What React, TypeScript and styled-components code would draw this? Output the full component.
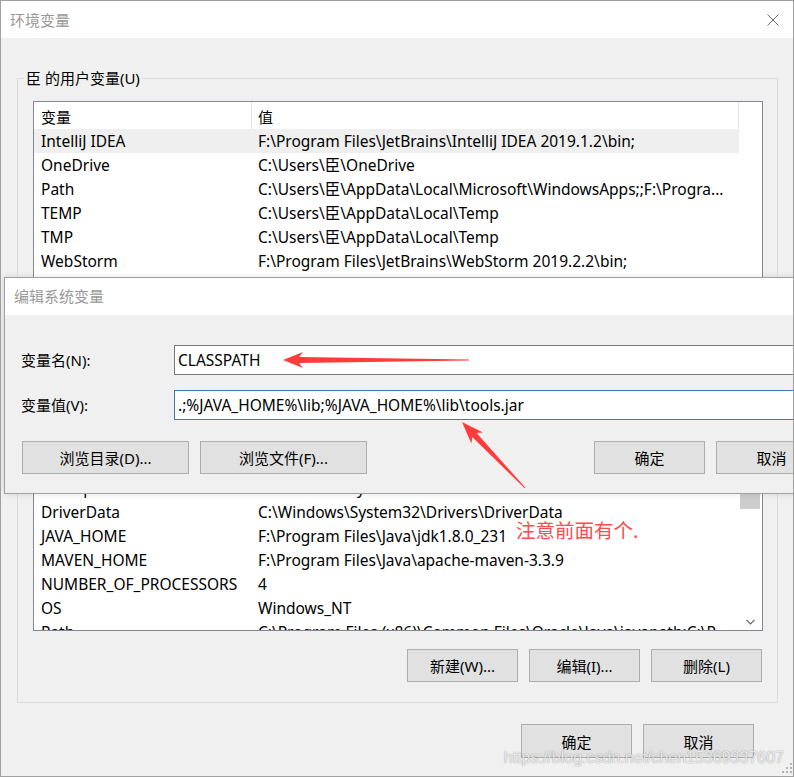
import React from "react";
import styled, { createGlobalStyle } from "styled-components";

const GlobalStyle = createGlobalStyle`
  html, body { margin: 0; padding: 0; background: #f0f0f0; }
  body { font-family: "Noto Sans", "Noto Sans CJK SC", sans-serif; }
  #root { width: 794px; height: 777px; overflow: hidden; }
`;

const Window = styled.div`
  position: relative;
  width: 794px;
  height: 777px;
  box-sizing: border-box;
  border: 1px solid #a0a0a0;
  background: #f0f0f0;
  display: flex;
  flex-direction: column;
  overflow: hidden;
  font-family: "Noto Sans", "Noto Sans CJK SC", sans-serif;
  font-size: 15px;
  color: #000;
`;

const TitleBar = styled.div`
  height: 37px;
  flex: none;
  background: #fff;
  display: flex;
  align-items: center;
  justify-content: space-between;
  padding: 0 14px 0 9px;
`;

const TitleText = styled.span`
  color: #999;
  font-size: 15px;
  line-height: 20px;
`;

const Body = styled.div`
  display: flex;
  flex-direction: column;
  padding: 40px 15px 0 16px;
`;

const GroupBox = styled.div`
  border: 1px solid #dcdcdc;
  padding: 0 14px 20px 15px;
  display: flex;
  flex-direction: column;
`;

const Legend = styled.span`
  align-self: flex-start;
  margin: -11px 0 0 -9px;
  padding: 0 2px;
  line-height: 20px;
  height: 20px;
  background: #f0f0f0;
`;

const List = styled.div`
  margin-top: 13px;
  height: 530px;
  box-sizing: border-box;
  border: 1px solid #828790;
  background: #fff;
  display: flex;
  overflow: hidden;
`;

const ListContent = styled.div`
  flex: 1;
  min-width: 0;
  display: flex;
  flex-direction: column;
  overflow: hidden;
`;

const Header = styled.div`
  display: flex;
  height: 27px;
  flex: none;
  border-right: 1px solid #e5e5e5;
`;

const HeaderCell = styled.div<{ $w?: number }>`
  ${(p) => (p.$w ? `width: ${p.$w}px; border-right: 1px solid #e5e5e5;` : "flex: 1;")}
  padding: 3px 0 0 ${(p) => (p.$w ? 7 : 6)}px;
  line-height: 24px;
  white-space: nowrap;
`;

const Row = styled.div<{ $selected?: boolean }>`
  display: flex;
  height: 24px;
  flex: none;
  line-height: 24px;
  font-size: 15.5px;
  background: ${(p) => (p.$selected ? "#efefef" : "transparent")};
  white-space: nowrap;
`;

const NameCell = styled.div`
  width: 210px;
  padding-left: 7px;
  overflow: hidden;
`;

const ValueCell = styled.div`
  flex: 1;
  padding-left: 7px;
  overflow: hidden;
`;

const HiddenGap = styled.div`
  height: 203px;
  flex: none;
`;

const Scrollbar = styled.div`
  width: 23px;
  flex: none;
  display: flex;
  flex-direction: column;
  background: #fff;
`;

const Thumb = styled.div`
  margin: 391px 0 0 1px;
  width: 20px;
  height: 16px;
  background: #cdcdcd;
`;

const ScrollFill = styled.div`
  flex: 1;
`;

const ScrollArrow = styled.div`
  height: 17px;
  display: flex;
  align-items: center;
  justify-content: center;
`;

const ButtonRow = styled.div<{ $top: number; $right: number }>`
  display: flex;
  justify-content: flex-end;
  gap: 11px;
  margin-top: ${(p) => p.$top}px;
  padding-right: ${(p) => p.$right}px;
`;

const Button = styled.div<{ $w: number; $h?: number }>`
  width: ${(p) => p.$w}px;
  height: ${(p) => p.$h ?? 33}px;
  box-sizing: border-box;
  border: 1px solid #adadad;
  background: #e1e1e1;
  display: flex;
  align-items: center;
  justify-content: center;
  font-size: 15px;
  white-space: nowrap;
`;

const Footer = styled.div`
  display: flex;
  justify-content: flex-end;
  gap: 11px;
  margin-top: 21px;
  padding-right: 24px;
`;

const Dialog = styled.div`
  position: absolute;
  left: 3px;
  top: 276px;
  width: 841px;
  box-sizing: border-box;
  border: 1px solid #a0a0a0;
  background: #f0f0f0;
  box-shadow: 0 0 6px rgba(0, 0, 0, 0.12);
`;

const DialogTitle = styled.div`
  height: 37px;
  background: #fff;
  padding-left: 9px;
  line-height: 37px;
  color: #999;
`;

const DialogBody = styled.div`
  padding: 30px 17px 19px 16px;
`;

const Form = styled.div`
  display: grid;
  grid-template-columns: 153px 1fr;
  row-gap: 15px;
  align-items: center;
`;

const Label = styled.label`
  line-height: 20px;
`;

const TextBox = styled.input<{ $focused?: boolean }>`
  height: 30px;
  box-sizing: border-box;
  border: 1px solid ${(p) => (p.$focused ? "#3d7bb6" : "#7a7a7a")};
  padding: 0 3px;
  margin: 0;
  font-family: "Noto Sans", "Noto Sans CJK SC", sans-serif;
  font-size: 15.5px;
  color: #000;
  background: #fff;
  outline: none;
  width: 100%;
`;

const DialogButtons = styled.div`
  margin-top: 21px;
  display: flex;
  justify-content: space-between;
  padding-left: 1px;
`;

const ButtonGroup = styled.div`
  display: flex;
  gap: 11px;
`;

const Annotation = styled.div`
  position: absolute;
  left: 515px;
  top: 517px;
  font-family: "Noto Sans CJK SC", sans-serif;
  font-size: 19.5px;
  line-height: 24px;
  color: #ff4b4b;
`;

const Overlay = styled.svg`
  position: absolute;
  left: -1px;
  top: -1px;
  pointer-events: none;
`;

const Watermark = styled.div`
  position: absolute;
  right: 9px;
  bottom: 9px;
  font-family: "Liberation Sans", Arial, sans-serif;
  font-size: 16px;
  color: rgba(255, 255, 255, 0.8);
  text-shadow: 0 0 1px rgba(0, 0, 0, 0.35), 0 0 2px rgba(0, 0, 0, 0.15);
  white-space: nowrap;
`;

const Grip = styled.svg`
  position: absolute;
  right: 1px;
  bottom: 3px;
`;

type Pt = [number, number];

function arrowPoints(tip: Pt, tail: Pt, headLen: number, headHalf: number, w0: number, w1: number): string {
  const dx = tail[0] - tip[0];
  const dy = tail[1] - tip[1];
  const len = Math.hypot(dx, dy);
  const ux = dx / len;
  const uy = dy / len;
  const nx = -uy;
  const ny = ux;
  const bx = tip[0] + ux * headLen;
  const by = tip[1] + uy * headLen;
  const nb = headLen - 4;
  const cx = tip[0] + ux * nb;
  const cy = tip[1] + uy * nb;
  const pts: Pt[] = [
    tip,
    [bx + nx * headHalf, by + ny * headHalf],
    [cx + nx * (w0 / 2), cy + ny * (w0 / 2)],
    [tail[0] + nx * (w1 / 2), tail[1] + ny * (w1 / 2)],
    [tail[0] - nx * (w1 / 2), tail[1] - ny * (w1 / 2)],
    [cx - nx * (w0 / 2), cy - ny * (w0 / 2)],
    [bx - nx * headHalf, by - ny * headHalf],
  ];
  return pts.map((p) => `${p[0].toFixed(1)},${p[1].toFixed(1)}`).join(" ");
}

const userVars: [string, string][] = [
  ["IntelliJ IDEA", "F:\\Program Files\\JetBrains\\IntelliJ IDEA 2019.1.2\\bin;"],
  ["OneDrive", "C:\\Users\\臣\\OneDrive"],
  ["Path", "C:\\Users\\臣\\AppData\\Local\\Microsoft\\WindowsApps;;F:\\Progra..."],
  ["TEMP", "C:\\Users\\臣\\AppData\\Local\\Temp"],
  ["TMP", "C:\\Users\\臣\\AppData\\Local\\Temp"],
  ["WebStorm", "F:\\Program Files\\JetBrains\\WebStorm 2019.2.2\\bin;"],
];

const sysVars: [string, string][] = [
  ["ComSpec", "C:\\Windows\\system32\\cmd.exe"],
  ["DriverData", "C:\\Windows\\System32\\Drivers\\DriverData"],
  ["JAVA_HOME", "F:\\Program Files\\Java\\jdk1.8.0_231"],
  ["MAVEN_HOME", "F:\\Program Files\\Java\\apache-maven-3.3.9"],
  ["NUMBER_OF_PROCESSORS", "4"],
  ["OS", "Windows_NT"],
  ["Path", "C:\\Program Files (x86)\\Common Files\\Oracle\\Java\\javapath;C:\\P..."],
];

export default function App() {
  return (
    <>
      <GlobalStyle />
      <Window>
        <TitleBar>
          <TitleText>环境变量</TitleText>
          <svg width="12" height="12" viewBox="0 0 12 12">
            <path d="M0.5 0.5 L11.5 11.5 M11.5 0.5 L0.5 11.5" stroke="#6e6e6e" strokeWidth="1" fill="none" />
          </svg>
        </TitleBar>
        <Body>
          <GroupBox>
            <Legend>臣 的用户变量(U)</Legend>
            <List>
              <ListContent>
                <Header>
                  <HeaderCell $w={210}>变量</HeaderCell>
                  <HeaderCell>值</HeaderCell>
                </Header>
                {userVars.map(([n, v], i) => (
                  <Row key={"u" + i} $selected={i === 0}>
                    <NameCell>{n}</NameCell>
                    <ValueCell>{v}</ValueCell>
                  </Row>
                ))}
                <HiddenGap />
                {sysVars.map(([n, v], i) => (
                  <Row key={"s" + i}>
                    <NameCell>{n}</NameCell>
                    <ValueCell>{v}</ValueCell>
                  </Row>
                ))}
              </ListContent>
              <Scrollbar>
                <Thumb />
                <ScrollFill />
                <ScrollArrow>
                  <svg width="9" height="6" viewBox="0 0 9 6">
                    <path d="M0.5 0.8 L4.5 4.8 L8.5 0.8" stroke="#606060" strokeWidth="1.2" fill="none" />
                  </svg>
                </ScrollArrow>
              </Scrollbar>
            </List>
            <ButtonRow $top={18} $right={1}>
              <Button $w={111}>新建(W)...</Button>
              <Button $w={111}>编辑(I)...</Button>
              <Button $w={111}>删除(L)</Button>
            </ButtonRow>
          </GroupBox>
          <Footer>
            <Button $w={111} $h={34}>确定</Button>
            <Button $w={111} $h={34}>取消</Button>
          </Footer>
        </Body>

        <Dialog>
          <DialogTitle>编辑系统变量</DialogTitle>
          <DialogBody>
            <Form>
              <Label>变量名(N):</Label>
              <TextBox readOnly value="CLASSPATH" />
              <Label>变量值(V):</Label>
              <TextBox readOnly $focused value=".;%JAVA_HOME%\lib;%JAVA_HOME%\lib\tools.jar" />
            </Form>
            <DialogButtons>
              <ButtonGroup>
                <Button $w={167}>浏览目录(D)...</Button>
                <Button $w={167}>浏览文件(F)...</Button>
              </ButtonGroup>
              <ButtonGroup>
                <Button $w={111}>确定</Button>
                <Button $w={111}>取消</Button>
              </ButtonGroup>
            </DialogButtons>
          </DialogBody>
        </Dialog>

        <Overlay width="794" height="777" viewBox="0 0 794 777">
          <polygon points={arrowPoints([283, 360], [469, 360], 20, 8, 6, 1)} fill="#ff3b3b" />
          <polygon points={arrowPoints([462, 422], [525, 488], 22, 8, 6, 1)} fill="#ff3b3b" />
        </Overlay>

        <Annotation>注意前面有个.</Annotation>

        <Watermark>https://blog.csdn.net/chen15369337607</Watermark>
        <Grip width="10" height="10" viewBox="0 0 10 10">
          <rect x="8" y="0" width="2" height="2" fill="#b4b4b4" />
          <rect x="4" y="4" width="2" height="2" fill="#b4b4b4" />
          <rect x="8" y="4" width="2" height="2" fill="#b4b4b4" />
          <rect x="0" y="8" width="2" height="2" fill="#b4b4b4" />
          <rect x="4" y="8" width="2" height="2" fill="#b4b4b4" />
          <rect x="8" y="8" width="2" height="2" fill="#b4b4b4" />
        </Grip>
      </Window>
    </>
  );
}
